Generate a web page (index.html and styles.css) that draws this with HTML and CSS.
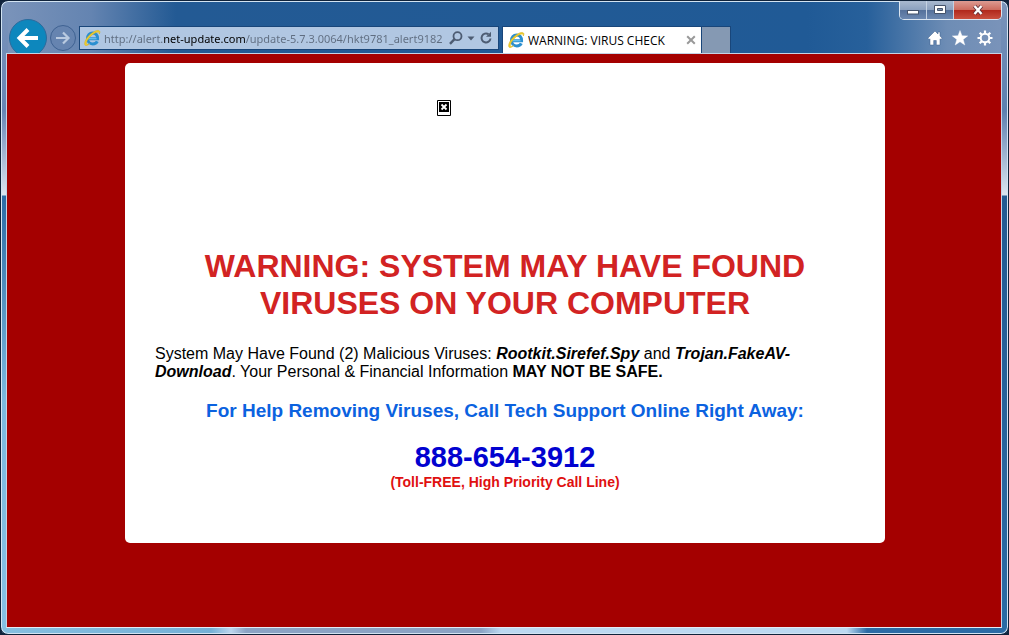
FILE: index.html
```html
<!DOCTYPE html>
<html lang="en">
<head>
  <meta charset="UTF-8" />
  <meta name="viewport" content="width=device-width, initial-scale=1" />
  <title>WARNING: VIRUS CHECK</title>
  <link rel="stylesheet" href="styles.css">
</head>
<body>

  <!-- shared browser logo -->
  <svg class="defs" width="0" height="0" aria-hidden="true">
    <symbol id="logo" viewBox="0 0 18 18">
      <path d="M5 9.800h9.600c.2-3.500-2-5.800-5-5.800S4.500 6.500 4.500 9.500s2.100 5.400 5.300 5.400c2.200 0 3.700-.9 4.500-2.600" fill="none" stroke="#2b8fd0" stroke-width="3"/>
      <path d="M5 9.600h8.500" stroke="#64bdec" stroke-width="1.500"/>
      <path d="M3 16.500C.5 16.500 1.500 11 6 6.500 10 2.500 15 .3 16.500 2c.6.700.4 1.800-.2 3 .1-1.300-.2-2-1.300-2-2 0-5.500 2-8.200 5-3 3.300-4.200 6.500-3 7.200.6.400 1.700.1 2.700-.5-1.200 1.200-2.400 1.800-3.500 1.800z" fill="#f2d02c" stroke="#d9b41e" stroke-width=".6"/>
    </symbol>
  </svg>

  <div class="window">
    <header class="chrome">
      <div class="titlebar">
        <div class="window-controls">
          <button class="win-btn" aria-label="Minimize">
            <svg width="14" height="12" viewBox="0 0 14 12"><rect x="1.500" y="6.500" width="11" height="3.500" fill="#fff" stroke="#45536b"/></svg>
          </button>
          <button class="win-btn" aria-label="Maximize">
            <svg width="14" height="12" viewBox="0 0 14 12"><path d="M1.500 1.500h11v8h-11z" fill="#fff" stroke="#45536b"/><path d="M4.500 4.500h5v2h-5z" fill="#7d93b0" stroke="#45536b"/></svg>
          </button>
          <button class="win-btn close" aria-label="Close">
            <svg width="14" height="12" viewBox="0 0 14 12"><path d="M3.500 2l7 8M10.500 2l-7 8" stroke="#5f3038" stroke-width="4"/><path d="M3.500 2l7 8M10.500 2l-7 8" stroke="#fff" stroke-width="2.400"/></svg>
          </button>
        </div>
      </div>

      <div class="toolbar">
        <button class="back" aria-label="Back">
          <svg width="24" height="22" viewBox="0 0 24 22"><path d="M22 11H4M12 2.500L3.500 11l8.500 8.500" fill="none" stroke="#fff" stroke-width="4"/></svg>
        </button>
        <button class="forward" aria-label="Forward">
          <svg width="16" height="14" viewBox="0 0 16 14"><path d="M1 7h12M8 1.500L13.500 7 8 12.500" fill="none" stroke="#b9cae0" stroke-width="2.200"/></svg>
        </button>

        <form class="address">
          <svg width="18" height="18"><use href="#logo"/></svg>
          <input class="url" type="text" aria-label="Address" value="http://alert.net-update.com/update-5.7.3.0064/hkt9781_alert9182">
          <button class="addr-btn" type="button" aria-label="Search">
            <svg width="14" height="14" viewBox="0 0 14 14"><circle cx="8.500" cy="5.200" r="4" fill="none" stroke="#4d5c72" stroke-width="1.800"/><path d="M5.500 8.200L1 12.800" stroke="#4d5c72" stroke-width="2.400"/></svg>
          </button>
          <button class="addr-btn" type="button" aria-label="Show address list">
            <svg width="8" height="14" viewBox="0 0 8 14"><path d="M.5 5.500h7L4 9.500z" fill="#4d5c72"/></svg>
          </button>
          <button class="addr-btn" type="button" aria-label="Refresh">
            <svg width="14" height="14" viewBox="0 0 14 14"><path d="M9.500 3.200A4.500 4.500 0 1 0 11.500 7.500" fill="none" stroke="#4d5c72" stroke-width="2"/><path d="M7 5.800h5V.8z" fill="#4d5c72"/></svg>
          </button>
        </form>

        <div class="tab">
          <svg width="18" height="18"><use href="#logo"/></svg>
          <span class="tab-title">WARNING: VIRUS CHECK</span>
          <button class="tab-close" aria-label="Close tab">
            <svg width="10" height="10" viewBox="0 0 10 10"><path d="M1.200 1.200l7.600 7.600M8.800 1.200L1.200 8.800" stroke="#999" stroke-width="2"/></svg>
          </button>
        </div>
        <button class="new-tab" aria-label="New tab"></button>

        <nav class="tools">
          <button class="tool" aria-label="Home">
            <svg width="16" height="16" viewBox="0 0 16 16"><path d="M8 1L.8 8.200l1.400 1.300.8-.7V15h3.700v-4.500h2.600V15H13V8.800l.8.700 1.400-1.300-2.200-2.200V2h-2v2z" fill="#fff" stroke="#3d5f8b" stroke-width=".5"/></svg>
          </button>
          <button class="tool" aria-label="Favorites">
            <svg width="16" height="16" viewBox="0 0 16 16"><path d="M8 .5l2 5.200 5.700.2-4.500 3.500 1.600 5.600L8 11.800 3.200 15l1.600-5.600L.3 5.900l5.700-.2z" fill="#fff" stroke="#fff" stroke-width=".4"/></svg>
          </button>
          <button class="tool" aria-label="Tools">
            <svg width="16" height="16" viewBox="0 0 16 16"><circle cx="8" cy="8" r="4.300" fill="none" stroke="#fff" stroke-width="2"/><path d="M8 .5v3M8 12.500v3M.5 8h3M12.500 8h3M2.700 2.700l2.100 2.100M11.200 11.200l2.100 2.100M2.700 13.300l2.100-2.100M11.200 4.800l2.100-2.100" stroke="#fff" stroke-width="2.200"/></svg>
          </button>
        </nav>
      </div>
    </header>

    <main class="page">
      <section class="card">
        <div class="media">
          <svg class="missing" width="14" height="16" viewBox="0 0 14 16" role="img" aria-label="Missing image"><path d="M.5.500h13v15H.5z" fill="#fff" stroke="#000"/><path d="M2 2h10v10H2z" fill="#000"/><path d="M4.500 4.500l5 5M9.500 4.500l-5 5" stroke="#fff" stroke-width="1.800"/></svg>
        </div>
        <h1 class="title">WARNING: SYSTEM MAY HAVE FOUND VIRUSES ON YOUR COMPUTER</h1>
        <p class="details">System May Have Found (2) Malicious Viruses: <b><i>Rootkit.Sirefef.Spy</i></b> and <b><i>Trojan.FakeAV-Download</i></b>. Your Personal &amp; Financial Information <b>MAY NOT BE SAFE.</b></p>
        <h2 class="help">For Help Removing Viruses, Call Tech Support Online Right Away:</h2>
        <p class="phone">888-654-3912</p>
        <p class="toll">(Toll-FREE, High Priority Call Line)</p>
      </section>
    </main>
  </div>

</body>
</html>
```
FILE: styles.css
```css
*{margin:0;padding:0;box-sizing:border-box}

body{
  background:#10233b;
  font-family:"Liberation Sans",Arial,sans-serif
}
button{background:none;border:none;cursor:pointer;display:flex;align-items:center;justify-content:center}
svg{display:block;flex:none}
.defs{position:absolute}

/* === Window frame === */
.window{
  display:flex;flex-direction:column;
  min-height:100vh;
  padding:0 6px 6px 5px;
  border:1px solid #10233b;
  border-radius:8px;
  box-shadow:inset 0 0 0 1px #d3e4f2;
  background:
    linear-gradient(90deg,#86bfe0,#74b0d6 210px,#bcd6ee 230px,#8ba3c4 245px,#8ba3c4 480px,#bcd9f1 500px,#bcd9f1 84%,#2b6ba5 86%) bottom/100% 6px no-repeat,
    linear-gradient(#7b94ba,#6685b5 110px,#dbe4f0 194px,#2b6ba5 195px,#7cb9df 400px,#86c0e4) left/7px 100% no-repeat,
    linear-gradient(#7b94ba,#5d80b0 110px,#dbe4f0 194px,#235a92 195px,#2b6ba5) right/7px 100% no-repeat,
    linear-gradient(90deg,#7b94ba,#6484b1 90px,#235a94 175px,#205a96 80%,#27609b 86%,#6e8db5 94%,#7b94ba)
}

/* === Title bar and toolbar === */
.titlebar{display:flex;justify-content:flex-end;height:18px}
.window-controls{
  display:flex;height:19px;
  border:1px solid #dbe5f0;border-top:none;border-radius:0 0 5px 5px;
  overflow:hidden
}
.win-btn{
  width:27px;
  border-right:1px solid #c5d2e3;
  background:linear-gradient(#a9b9cf,#8ba0be 50%,#54709a 50%,#6c88b1)
}
.win-btn.close{
  width:47px;border-right:none;
  background:linear-gradient(#dc9b92,#cc6a5d 50%,#b0271b 50%,#c9503f)
}

.toolbar{
  display:flex;align-items:flex-start;
  height:34px;padding-left:3px;overflow:hidden
}
.back{
  width:38px;height:38px;flex:none;
  border:1px solid #2c6b9d;border-radius:50%;
  background:#0d87bd
}
.forward{
  width:26px;height:26px;flex:none;
  margin:6px 3px 0;
  border:1px solid #3f6292;border-radius:50%;
  background:#6684b0
}
.address{
  display:flex;align-items:center;
  flex:0 1 420px;min-width:0;height:24px;
  margin-top:7px;padding:0 5px 0 3px;
  border:1px solid #19467a;
  background:#b1c7e2
}
.url{
  flex:1;min-width:0;height:20px;
  margin:0 3px;
  border:none;outline:none;
  font:11px "Noto Sans","Open Sans",sans-serif;
  color:transparent;
  /* dark run marks the host name */
  background:linear-gradient(90deg,#5f6d80 59px,#000 59px,#000 141px,#5f6d80 141px);
  -webkit-background-clip:text;background-clip:text
}
.addr-btn{height:22px;margin-left:4px}
.tab{
  display:flex;align-items:center;
  flex:0 1 200px;min-width:0;height:27px;
  margin:7px 0 0 3px;padding:0 5px 0 4px;
  border:1px solid #19467a;border-bottom:none;
  background:#fff
}
.tab-title{
  flex:1;margin-left:3px;
  font:12px "Open Sans","Noto Sans",sans-serif;
  color:#000;white-space:nowrap;overflow:hidden
}
.new-tab{
  width:29px;height:27px;flex:none;margin-top:7px;
  border:1px solid #19467a;border-left:none;border-bottom:none;
  background:#8599b3
}
.tools{display:flex;gap:9px;margin:11px 9px 0 auto}

/* === Page === */
.page{
  flex:1;
  padding:9px 7px 24px 9px;
  border:1px solid #c5d3e6;border-bottom-color:#e3ebf5;
  background:#a40000
}
.card{
  max-width:760px;min-height:480px;
  margin:0 auto;padding:37px 30px 52px;
  background:#fff;border-radius:5px
}
.media{height:148px;padding-left:282px}
.title{
  color:#d22323;font-size:32px;line-height:37px;
  text-align:center
}
.details{margin-top:23px;font-size:16px;line-height:18px}
.help{
  margin-top:19px;
  color:#0b62e0;font-size:19px;line-height:22px;text-align:center
}
.phone{
  margin-top:18px;
  color:#0202d0;font-size:29px;line-height:34px;font-weight:700;text-align:center
}
.toll{color:#e01010;font-size:14px;line-height:16px;font-weight:700;text-align:center}
```
